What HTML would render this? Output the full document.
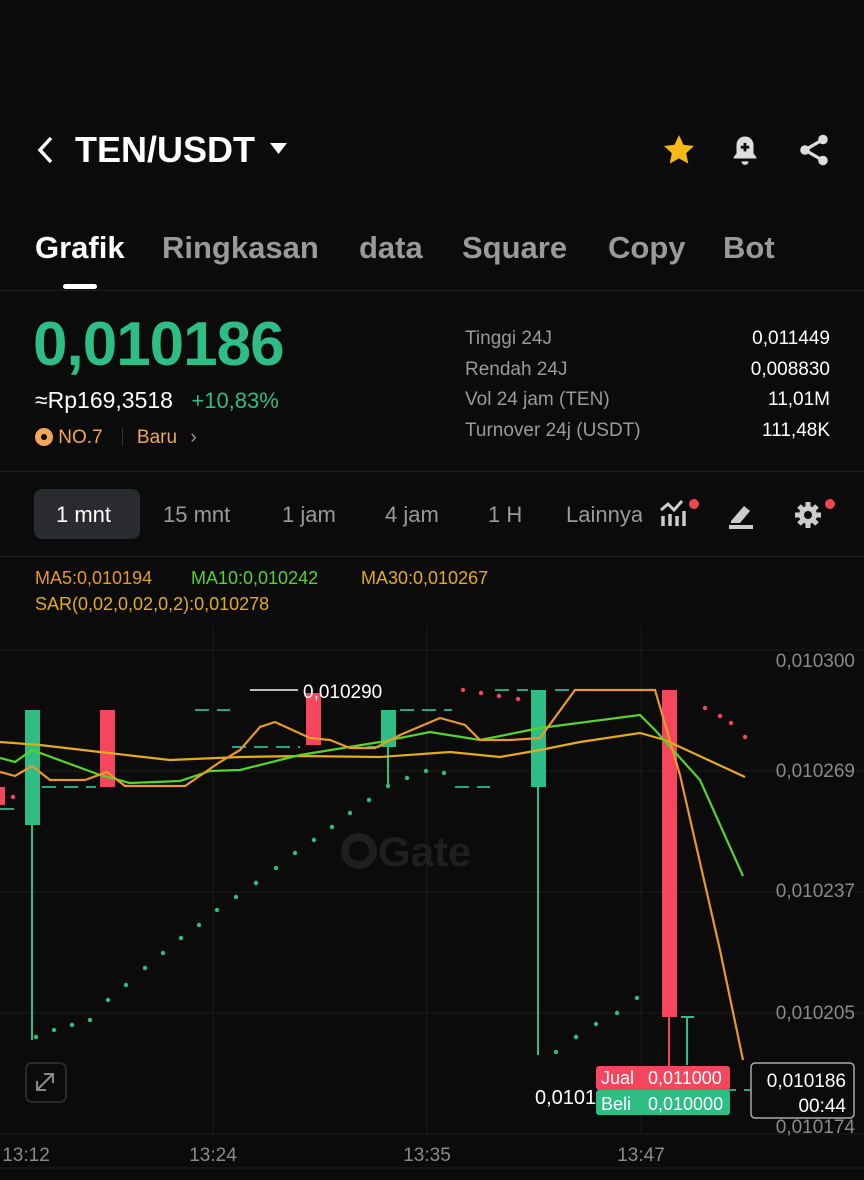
<!DOCTYPE html>
<html><head><meta charset="utf-8"><style>
*{margin:0;padding:0;box-sizing:border-box}
body{width:864px;height:1180px;background:#0b0b0b;color:#fff;font-family:"Liberation Sans",sans-serif;position:relative;overflow:hidden}
.a{position:absolute;white-space:nowrap}
.g{color:#9a9a9a}
</style></head><body>
<div class="a" style="left:35px;top:129px;font-size:36px;font-weight:bold">
<svg width="22" height="30" style="vertical-align:-3px;margin-right:18px"><path d="M16 3 L5 15 L16 27" stroke="#fff" stroke-width="3.5" fill="none"/></svg>TEN/USDT</div>
<svg class="a" style="left:270px;top:143px" width="18" height="12"><path d="M0 0H17L8.5 11Z" fill="#fff"/></svg>
<svg class="a" style="left:660px;top:132px" width="38" height="36" viewBox="0 0 24 24"><path d="M12 2l3 6.5 7 .8-5.2 4.8 1.4 7L12 17.6 5.8 21.1l1.4-7L2 9.3l7-.8z" fill="#f5b915"/></svg>
<svg class="a" style="left:728px;top:132px" width="34" height="36" viewBox="0 0 24 24"><path d="M12 2.5c3.5 0 6 2.6 6 6v6l2 2.5v1H4v-1l2-2.5v-6c0-3.4 2.5-6 6-6z" fill="#ddd"/><path d="M9.5 20h5a2.5 2.5 0 01-5 0z" fill="#ddd"/><path d="M12 7v6M9 10h6" stroke="#0b0b0b" stroke-width="2"/></svg>
<svg class="a" style="left:796px;top:132px" width="36" height="36" viewBox="0 0 24 24"><circle cx="18" cy="5" r="3.2" fill="#ddd"/><circle cx="6" cy="12" r="3.2" fill="#ddd"/><circle cx="18" cy="19" r="3.2" fill="#ddd"/><path d="M18 5L6 12L18 19" stroke="#ddd" stroke-width="2.2" fill="none"/></svg>

<div class="a" style="left:35px;top:230px;font-size:31px;font-weight:bold">Grafik</div>
<div class="a g" style="left:162px;top:230px;font-size:31px;font-weight:bold">Ringkasan</div>
<div class="a g" style="left:359px;top:230px;font-size:31px;font-weight:bold">data</div>
<div class="a g" style="left:462px;top:230px;font-size:31px;font-weight:bold">Square</div>
<div class="a g" style="left:608px;top:230px;font-size:31px;font-weight:bold">Copy</div>
<div class="a g" style="left:723px;top:230px;font-size:31px;font-weight:bold">Bot</div>
<div class="a" style="left:63px;top:284px;width:34px;height:5px;border-radius:3px;background:#fff"></div>
<div class="a" style="left:0;top:290px;width:864px;height:1px;background:#1e1e1e"></div>

<div class="a" style="left:33px;top:309px;font-size:62px;font-weight:bold;color:#2ebd85;letter-spacing:-1px">0,010186</div>
<div class="a" style="left:35px;top:387px;font-size:23px">≈Rp169,3518 <span style="color:#2ebd85;margin-left:12px;font-size:22px">+10,83%</span></div>
<div class="a" style="left:35px;top:427px;font-size:19px;color:#f2a65a"><span style="display:inline-block;width:18px;height:18px;border-radius:50%;background:#f2a65a;vertical-align:-3px;position:relative"><span style="position:absolute;left:6px;top:6px;width:6px;height:6px;border-radius:50%;background:#0b0b0b"></span></span> NO.7 <span style="display:inline-block;width:1px;height:18px;background:#333;margin:0 14px;vertical-align:-3px"></span>Baru <span style="color:#999;margin-left:8px">›</span></div>

<div class="a g" style="left:465px;top:324px;font-size:19px;line-height:30.5px">Tinggi 24J<br>Rendah 24J<br>Vol 24 jam (TEN)<br>Turnover 24j (USDT)</div>
<div class="a" style="right:34px;top:324px;font-size:19px;line-height:30.5px;text-align:right">0,011449<br>0,008830<br>11,01M<br>111,48K</div>
<div class="a" style="left:0;top:471px;width:864px;height:1px;background:#1e1e1e"></div>

<div class="a" style="left:34px;top:489px;width:106px;height:50px;border-radius:8px;background:#2a2b2e"></div>
<div class="a" style="left:56px;top:502px;font-size:22px">1 mnt</div>
<div class="a g" style="left:163px;top:502px;font-size:22px">15 mnt</div>
<div class="a g" style="left:282px;top:502px;font-size:22px">1 jam</div>
<div class="a g" style="left:385px;top:502px;font-size:22px">4 jam</div>
<div class="a g" style="left:488px;top:502px;font-size:22px">1 H</div>
<div class="a g" style="left:566px;top:502px;font-size:22px;width:76px;overflow:hidden">Lainnya</div>
<svg class="a" style="left:658px;top:498px" width="44" height="32"><path d="M3 12l7-6 6 6 8-9" stroke="#ccc" stroke-width="3" fill="none"/><path d="M5 18v10M12 16v12M19 18v10M26 13v15" stroke="#ccc" stroke-width="3.5"/><circle cx="36" cy="6" r="5" fill="#f0454f"/></svg>
<svg class="a" style="left:726px;top:500px" width="32" height="30"><path d="M3 27h24" stroke="#ccc" stroke-width="4"/><path d="M5 21l13-15 6 5-10 12H5z" fill="#ccc"/></svg>
<svg class="a" style="left:793px;top:498px" width="44" height="32" viewBox="0 0 44 32"><g transform="translate(15 17)" fill="#ccc"><circle r="9"/><g stroke="#ccc" stroke-width="5"><path d="M0-13V13M-13 0H13M-9-9L9 9M9-9L-9 9"/></g><circle r="4" fill="#0b0b0b"/></g><circle cx="37" cy="6" r="5" fill="#f0454f"/></svg>
<div class="a" style="left:0;top:556px;width:864px;height:1px;background:#1e1e1e"></div>

<div class="a" style="left:35px;top:568px;font-size:18px;color:#e8982d">MA5:0,010194</div>
<div class="a" style="left:191px;top:568px;font-size:18px;color:#58d22c">MA10:0,010242</div>
<div class="a" style="left:361px;top:568px;font-size:18px;color:#e3ac1c">MA30:0,010267</div>
<div class="a" style="left:35px;top:594px;font-size:18px;color:#e3ac1c">SAR(0,02,0,02,0,2):0,010278</div>

<svg class="a" style="left:0;top:556px" width="864" height="624" font-family="Liberation Sans">
<g stroke="#1b1b1b" stroke-width="1"><path d="M0 94H864M0 215H864M0 336H864M0 457H864M0 578H864M213 70V578M427 70V578M641 70V578"/></g>
<text x="378" y="310" font-size="42" font-weight="bold" fill="#1f1f1f">Gate</text>
<circle cx="359" cy="295" r="14" stroke="#1f1f1f" stroke-width="8" fill="none"/>
<g fill="#8a8a8a" font-size="19" text-anchor="end"><text x="855" y="111">0,010300</text><text x="855" y="221">0,010269</text><text x="855" y="341">0,010237</text><text x="855" y="463">0,010205</text><text x="855" y="577">0,010174</text></g>
<g fill="#8a8a8a" font-size="19" text-anchor="middle"><text x="26" y="605">13:12</text><text x="213" y="605">13:24</text><text x="427" y="605">13:35</text><text x="641" y="605">13:47</text></g>
<path d="M0 612H864" stroke="#1e1e1e"/>
</svg>

<svg class="a" style="left:0;top:0" width="864" height="1180">
<g stroke="#2aa57f" stroke-width="2" stroke-dasharray="14 8"><path d="M42 787H96M195 710H230M232 747H300M345 747H380M400 710H452M455 787H490M495 690H528M555 690H656M0 809H20M700 1090H750"/></g>
<g fill="#2ebd85" stroke="#2ebd85" stroke-width="2"><path d="M32 825V1040M388 747V785M538 787V1055M687 1017V1065M681 1017H694"/></g>
<rect x="25" y="710" width="15" height="115" fill="#2ebd85"/>
<rect x="381" y="710" width="15" height="37" fill="#2ebd85"/>
<rect x="531" y="690" width="15" height="97" fill="#2ebd85"/>
<rect x="0" y="787" width="5" height="18" fill="#f6465d"/>
<rect x="100" y="710" width="15" height="77" fill="#f6465d"/>
<rect x="306" y="693" width="15" height="52" fill="#f6465d"/>
<rect x="662" y="690" width="15" height="327" fill="#f6465d"/>
<path d="M669 1017V1075" stroke="#f6465d" stroke-width="2"/>
<path d="M250 690H298" stroke="#bbb" stroke-width="2"/>
<text x="303" y="698" font-size="19" fill="#fff">0,010290</text>
<g fill="none" stroke-width="2.2">
<polyline stroke="#e3ac1c" points="0,742 40,745 100,752 170,760 240,757 300,756 380,757 450,752 500,757 540,750 580,742 640,733 665,740 745,777"/>
<polyline stroke="#58d22c" points="0,758 15,762 32,750 100,775 130,783 180,781 210,771 240,770 300,755 380,742 430,732 480,740 540,728 640,715 655,730 700,780 743,876"/>
<polyline stroke="#e8982d" points="0,772 15,776 32,766 50,780 85,780 107,772 125,786 185,786 220,762 240,750 260,727 275,722 310,738 330,740 350,748 375,748 400,735 440,718 465,725 480,740 510,740 540,738 575,690 620,690 655,690 680,775 720,950 743,1060"/>
</g>
<g fill="#2ebd85">
<circle cx="36" cy="1037" r="2.2"/><circle cx="54" cy="1030" r="2.2"/><circle cx="72" cy="1025" r="2.2"/><circle cx="90" cy="1020" r="2.2"/><circle cx="108" cy="1000" r="2.2"/><circle cx="126" cy="985" r="2.2"/><circle cx="145" cy="968" r="2.2"/><circle cx="163" cy="953" r="2.2"/><circle cx="181" cy="938" r="2.2"/><circle cx="199" cy="925" r="2.2"/><circle cx="217" cy="910" r="2.2"/><circle cx="236" cy="897" r="2.2"/><circle cx="256" cy="883" r="2.2"/><circle cx="276" cy="868" r="2.2"/><circle cx="295" cy="853" r="2.2"/><circle cx="314" cy="840" r="2.2"/><circle cx="332" cy="827" r="2.2"/><circle cx="350" cy="813" r="2.2"/><circle cx="369" cy="800" r="2.2"/><circle cx="388" cy="786" r="2.2"/><circle cx="407" cy="778" r="2.2"/><circle cx="426" cy="771" r="2.2"/><circle cx="444" cy="773" r="2.2"/>
<circle cx="556" cy="1052" r="2.2"/><circle cx="576" cy="1037" r="2.2"/><circle cx="596" cy="1024" r="2.2"/><circle cx="617" cy="1013" r="2.2"/><circle cx="637" cy="998" r="2.2"/>
</g>
<g fill="#f6465d"><circle cx="13" cy="797" r="2.2"/><circle cx="463" cy="690" r="2.2"/><circle cx="481" cy="693" r="2.2"/><circle cx="499" cy="696" r="2.2"/><circle cx="518" cy="699" r="2.2"/><circle cx="705" cy="708" r="2.2"/><circle cx="720" cy="716" r="2.2"/><circle cx="731" cy="723" r="2.2"/><circle cx="745" cy="737" r="2.2"/></g>
<rect x="26" y="1063" width="40" height="39" rx="6" fill="#0b0b0b" stroke="#2a2a2a" stroke-width="2"/>
<path d="M37 1090l16-16M44 1074h9v9M46 1090h-9v-9" stroke="#888" stroke-width="2" fill="none"/>
<text x="535" y="1104" font-size="20" fill="#fff">0,010186</text>
<rect x="596" y="1066" width="134" height="24" rx="3" fill="#f6465d"/>
<rect x="596" y="1090" width="134" height="25" rx="3" fill="#2ebd85"/>
<g font-size="18" fill="#fff"><text x="601" y="1084">Jual</text><text x="648" y="1084">0,011000</text><text x="601" y="1110">Beli</text><text x="648" y="1110">0,010000</text></g>
<rect x="751" y="1063" width="103" height="55" rx="4" fill="#0b0b0b" stroke="#aaa" stroke-width="1.5"/>
<g font-size="19" fill="#fff" text-anchor="end"><text x="846" y="1087">0,010186</text><text x="846" y="1112">00:44</text></g>
</svg>
</body></html>
